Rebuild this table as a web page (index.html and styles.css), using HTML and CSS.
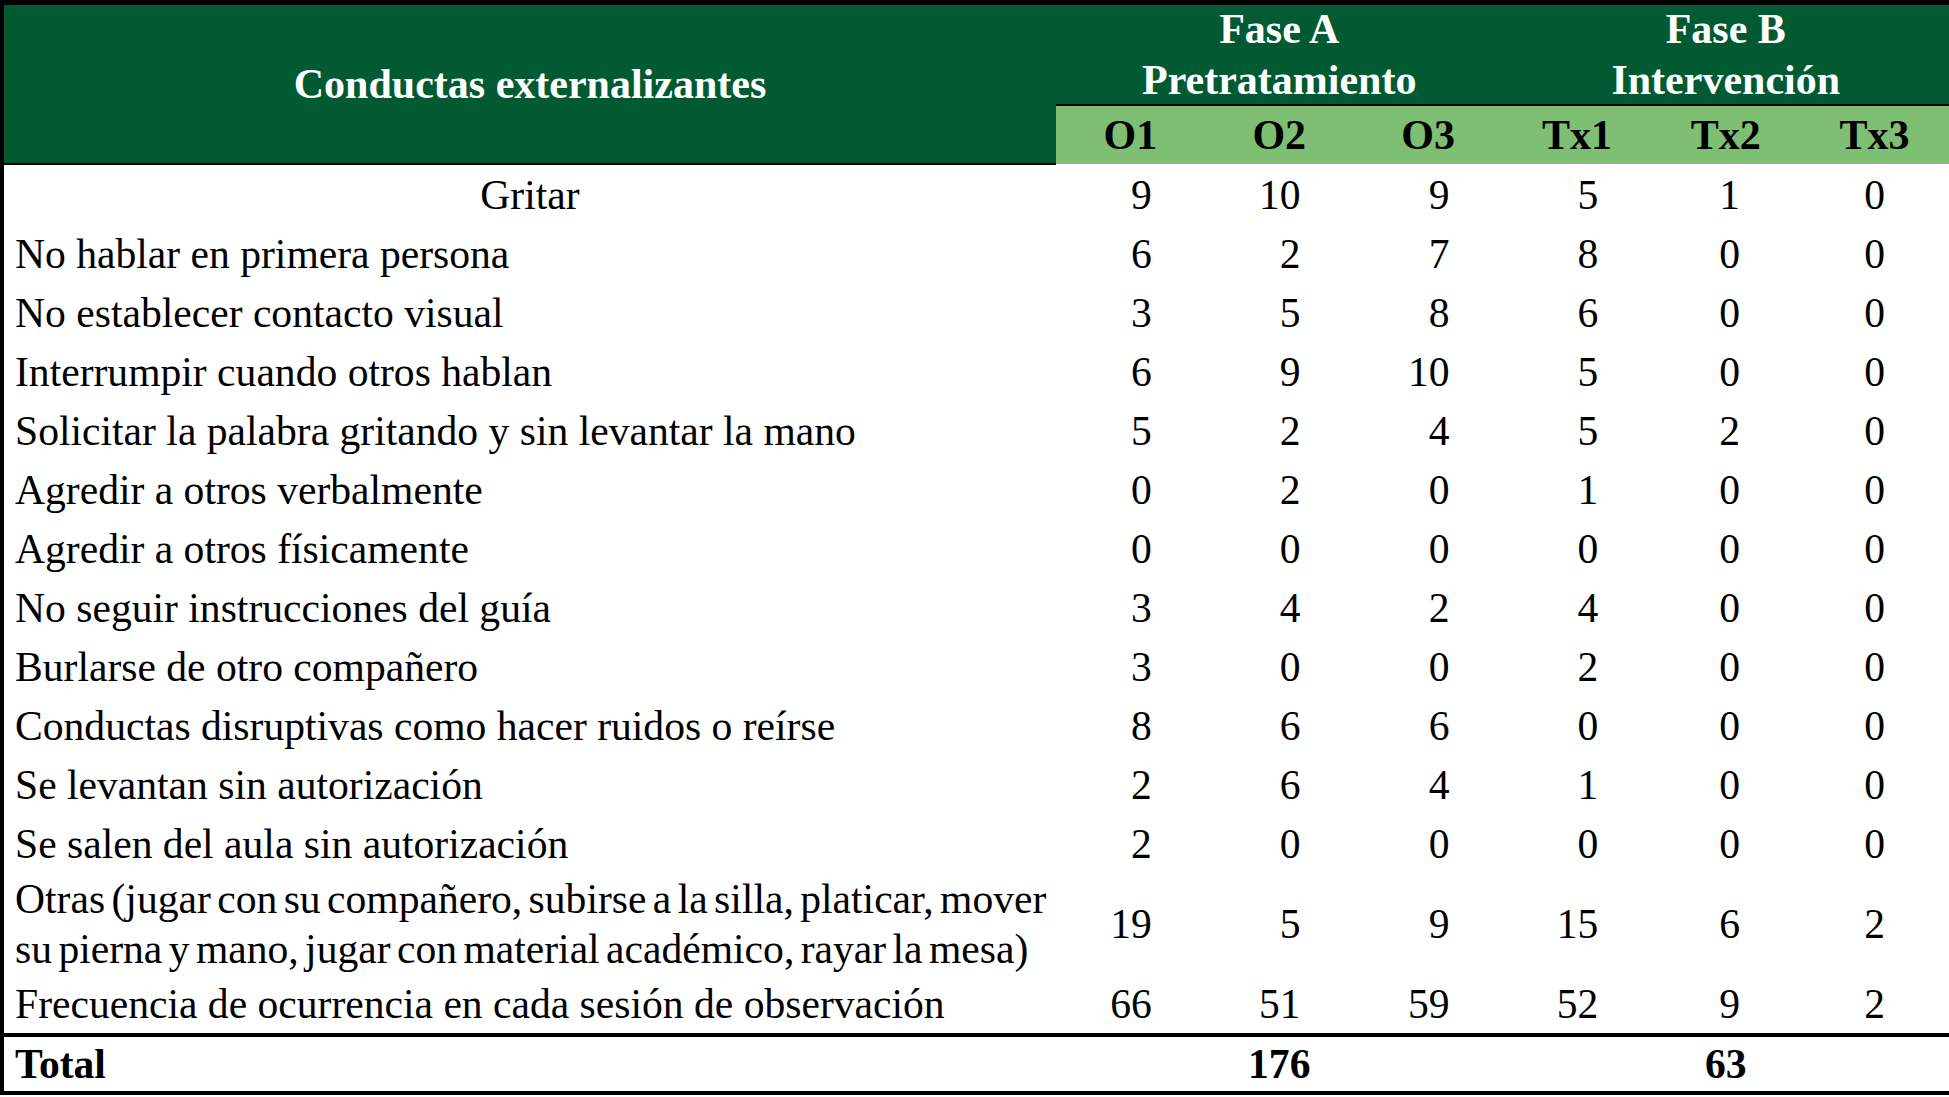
FILE: index.html
```html
<!DOCTYPE html>
<html lang="es">
<head>
<meta charset="utf-8">
<title>Conductas externalizantes</title>
<link rel="stylesheet" href="styles.css">
</head>
<body>
<div class="sheet">
  <div class="head">
    <div class="head-title">Conductas externalizantes</div>
    <div class="phase phase-a">Fase A<br>Pretratamiento</div>
    <div class="phase phase-b">Fase B<br>Intervención</div>
    <div class="sub">O1</div>
    <div class="sub">O2</div>
    <div class="sub">O3</div>
    <div class="sub">Tx1</div>
    <div class="sub">Tx2</div>
    <div class="sub">Tx3</div>
  </div>

  <div class="body">
    <div class="row"><div class="label label-center">Gritar</div><div class="num">9</div><div class="num">10</div><div class="num">9</div><div class="num">5</div><div class="num num-c">1</div><div class="num num-c3">0</div></div>
    <div class="row"><div class="label">No hablar en primera persona</div><div class="num">6</div><div class="num">2</div><div class="num">7</div><div class="num">8</div><div class="num num-c">0</div><div class="num num-c3">0</div></div>
    <div class="row"><div class="label">No establecer contacto visual</div><div class="num">3</div><div class="num">5</div><div class="num">8</div><div class="num">6</div><div class="num num-c">0</div><div class="num num-c3">0</div></div>
    <div class="row"><div class="label">Interrumpir cuando otros hablan</div><div class="num">6</div><div class="num">9</div><div class="num">10</div><div class="num">5</div><div class="num num-c">0</div><div class="num num-c3">0</div></div>
    <div class="row"><div class="label">Solicitar la palabra gritando y sin levantar la mano</div><div class="num">5</div><div class="num">2</div><div class="num">4</div><div class="num">5</div><div class="num num-c">2</div><div class="num num-c3">0</div></div>
    <div class="row"><div class="label">Agredir a otros verbalmente</div><div class="num">0</div><div class="num">2</div><div class="num">0</div><div class="num">1</div><div class="num num-c">0</div><div class="num num-c3">0</div></div>
    <div class="row"><div class="label">Agredir a otros físicamente</div><div class="num">0</div><div class="num">0</div><div class="num">0</div><div class="num">0</div><div class="num num-c">0</div><div class="num num-c3">0</div></div>
    <div class="row"><div class="label">No seguir instrucciones del guía</div><div class="num">3</div><div class="num">4</div><div class="num">2</div><div class="num">4</div><div class="num num-c">0</div><div class="num num-c3">0</div></div>
    <div class="row"><div class="label">Burlarse de otro compañero</div><div class="num">3</div><div class="num">0</div><div class="num">0</div><div class="num">2</div><div class="num num-c">0</div><div class="num num-c3">0</div></div>
    <div class="row"><div class="label">Conductas disruptivas como hacer ruidos o reírse</div><div class="num">8</div><div class="num">6</div><div class="num">6</div><div class="num">0</div><div class="num num-c">0</div><div class="num num-c3">0</div></div>
    <div class="row"><div class="label">Se levantan sin autorización</div><div class="num">2</div><div class="num">6</div><div class="num">4</div><div class="num">1</div><div class="num num-c">0</div><div class="num num-c3">0</div></div>
    <div class="row"><div class="label">Se salen del aula sin autorización</div><div class="num">2</div><div class="num">0</div><div class="num">0</div><div class="num">0</div><div class="num num-c">0</div><div class="num num-c3">0</div></div>
    <div class="row row-tall"><div class="label label-tight">Otras (jugar con su compañero, subirse a la silla, platicar, mover<br>su pierna y mano, jugar con material académico, rayar la mesa)</div><div class="num">19</div><div class="num">5</div><div class="num">9</div><div class="num">15</div><div class="num num-c">6</div><div class="num num-c3">2</div></div>
    <div class="row"><div class="label">Frecuencia de ocurrencia en cada sesión de observación</div><div class="num">66</div><div class="num">51</div><div class="num">59</div><div class="num">52</div><div class="num num-c">9</div><div class="num num-c3">2</div></div>
  </div>

  <div class="total">
    <div class="label label-bold">Total</div>
    <div class="total-a">176</div>
    <div class="total-b">63</div>
  </div>
</div>
</body>
</html>
```

FILE: styles.css
```css
html, body {
  margin: 0;
  padding: 0;
  background: #ffffff;
  overflow: hidden;
}

.sheet {
  width: 1949px;
  box-sizing: border-box;
  border-top: 5px solid #000;
  border-left: 4px solid #000;
  border-bottom: 4px solid #000;
  font-family: "Liberation Serif", "Times New Roman", serif;
  font-size: 41.6px;
  color: #000;
}

.head {
  display: grid;
  grid-template-columns: 1052px repeat(6, 1fr);
  grid-template-rows: 99px 61px;
  font-weight: bold;
  font-size: 42px;
}

.head-title {
  grid-row: 1 / span 2;
  grid-column: 1;
  background: #025a32;
  color: #fff;
  border-bottom: 2px solid #000;
  display: flex;
  align-items: center;
  justify-content: center;
}

.phase {
  background: #025a32;
  color: #fff;
  text-align: center;
  line-height: 51px;
  display: flex;
  flex-direction: column;
  justify-content: center;
}

.phase-a { grid-column: 2 / span 3; }
.phase-b { grid-column: 5 / span 3; }

.sub {
  align-self: start;
  height: 60px;
  box-sizing: border-box;
  background: #7ebf73;
  border-top: 2px solid #000;
  display: flex;
  align-items: center;
  justify-content: center;
}

.body {
  border-bottom: 4px solid #000;
}

.row,
.total {
  display: grid;
  grid-template-columns: 1052px repeat(6, 1fr);
  align-items: center;
  height: 59px;
}

.row-tall {
  height: 101px;
}

.label {
  padding-left: 11px;
  white-space: nowrap;
}

.label-center {
  text-align: center;
  padding-left: 0;
}

.label-tight {
  line-height: 50px;
  word-spacing: -4px;
}

.label-bold {
  font-weight: bold;
}

.num {
  text-align: right;
  padding-right: 53px;
}

.num-c {
  text-align: center;
  padding-right: 0;
  padding-left: 8px;
}

.num-c3 {
  text-align: center;
  padding-right: 0;
  padding-left: 0;
}

.total {
  height: 54px;
  font-weight: bold;
}

.total-a {
  grid-column: 2 / span 3;
  text-align: center;
}

.total-b {
  grid-column: 5 / span 3;
  text-align: center;
}
```
